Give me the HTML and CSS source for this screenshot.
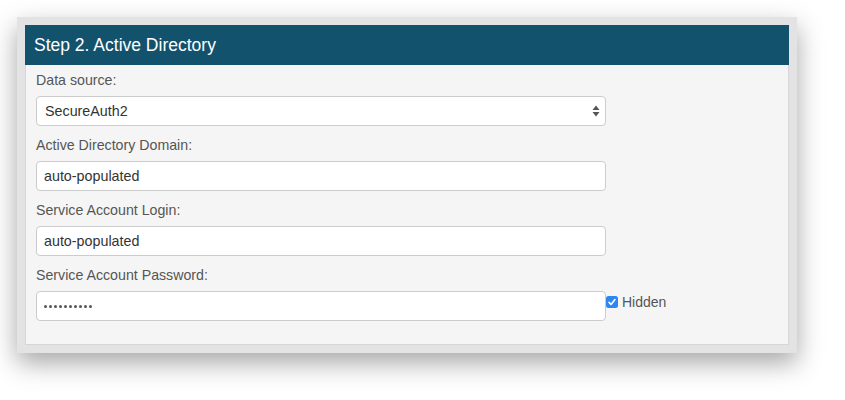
FILE: index.html
```html
<!DOCTYPE html>
<html>
<head>
<meta charset="utf-8">
<link rel="stylesheet" href="styles.css">
</head>
<body>
<div class="frame">
  <div class="panel">
    <div class="panel-heading">Step 2. Active Directory</div>
    <div class="panel-body">
      <div class="field">
        <label class="label">Data source:</label>
        <div class="select">
          <span>SecureAuth2</span>
          <svg class="arrows" width="8" height="12" viewBox="0 0 8 12"><path d="M4 0.5 L7.5 5 L0.5 5 Z M4 11.5 L7.5 7 L0.5 7 Z" fill="#555"/></svg>
        </div>
      </div>
      <div class="field">
        <label class="label">Active Directory Domain:</label>
        <div class="input">auto-populated</div>
      </div>
      <div class="field">
        <label class="label">Service Account Login:</label>
        <div class="input">auto-populated</div>
      </div>
      <div class="field">
        <label class="label">Service Account Password:</label>
        <div class="row">
          <div class="input dots"><span class="dot"></span><span class="dot"></span><span class="dot"></span><span class="dot"></span><span class="dot"></span><span class="dot"></span><span class="dot"></span><span class="dot"></span><span class="dot"></span><span class="dot"></span></div>
          <div class="check">
            <svg width="12" height="12" viewBox="0 0 12 12"><rect x="0" y="0" width="12" height="12" rx="2.5" fill="#2f86f2"/><path d="M3 6.3 L5 8.5 L9 3.5" fill="none" stroke="#fff" stroke-width="1.6" stroke-linecap="round" stroke-linejoin="round"/></svg>
            <span>Hidden</span>
          </div>
        </div>
      </div>
    </div>
  </div>
</div>
</body>
</html>
```
FILE: styles.css
```css
html, body {
  margin: 0;
  padding: 0;
  background: #ffffff;
}
body {
  padding: 17px 0 0 17px;
  min-height: 400px;
  box-sizing: border-box;
  font-family: "Liberation Sans", Arial, sans-serif;
}
.frame {
  width: 764px;
  padding: 8px;
  background: #e3e3e3;
  box-shadow: 0 10px 24px rgba(0, 0, 0, 0.35);
}
.panel {
  background: #f5f5f5;
  border: 1px solid #d6d6d6;
  border-top: none;
  height: 320px;
  box-sizing: border-box;
}
.panel-heading {
  height: 40px;
  background: #13526d;
  color: #ffffff;
  font-size: 17.5px;
  line-height: 40px;
  padding-left: 9px;
  margin: 0 -1px;
}
.panel-body {
  padding: 5px 10px 0 10px;
}
.field {
  margin-bottom: 9px;
}
.label {
  display: block;
  height: 20px;
  line-height: 20px;
  font-size: 14.2px;
  color: #555555;
  margin-bottom: 6px;
}
.select, .input {
  width: 570px;
  height: 30px;
  box-sizing: border-box;
  background: #ffffff;
  border: 1px solid #cccccc;
  border-radius: 4px;
  font-size: 14.3px;
  color: #333333;
  line-height: 28px;
  padding-left: 7px;
}
.select {
  display: flex;
  align-items: center;
  justify-content: space-between;
  padding-left: 8px;
  padding-right: 5px;
}
.arrows {
  display: block;
}
.row {
  display: flex;
  align-items: flex-start;
}
.dots {
  display: flex;
  align-items: center;
  gap: 2px;
  padding-left: 7px;
}
.dot {
  width: 3px;
  height: 3px;
  border-radius: 50%;
  background: #555555;
}
.check {
  display: flex;
  align-items: center;
  gap: 4px;
  margin-top: 3px;
  font-size: 14px;
  color: #555555;
}
.check svg {
  display: block;
}
```
